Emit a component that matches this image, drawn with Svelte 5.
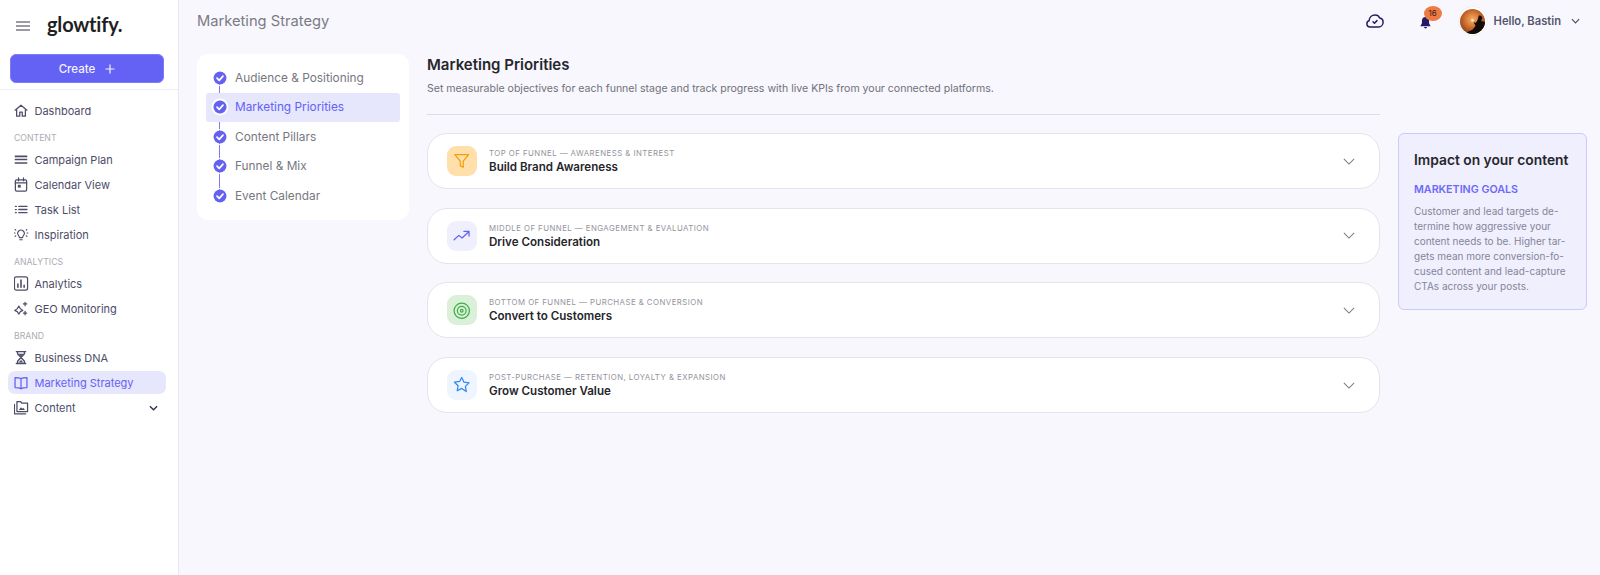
<script lang="ts">
  const nav = [
    { type: 'item', label: 'Dashboard', icon: 'home' },
    { type: 'head', label: 'CONTENT' },
    { type: 'item', label: 'Campaign Plan', icon: 'plan' },
    { type: 'item', label: 'Calendar View', icon: 'calendar' },
    { type: 'item', label: 'Task List', icon: 'list' },
    { type: 'item', label: 'Inspiration', icon: 'bulb' },
    { type: 'head', label: 'ANALYTICS' },
    { type: 'item', label: 'Analytics', icon: 'chart' },
    { type: 'item', label: 'GEO Monitoring', icon: 'sparkle' },
    { type: 'head', label: 'BRAND' },
    { type: 'item', label: 'Business DNA', icon: 'hourglass' },
    { type: 'item', label: 'Marketing Strategy', icon: 'book', active: true },
    { type: 'item', label: 'Content', icon: 'photos', caret: true }
  ];

  const steps = [
    { label: 'Audience & Positioning' },
    { label: 'Marketing Priorities', active: true },
    { label: 'Content Pillars' },
    { label: 'Funnel & Mix' },
    { label: 'Event Calendar' }
  ];

  const goals = [
    { over: 'TOP OF FUNNEL — AWARENESS & INTEREST', title: 'Build Brand Awareness', tone: 'amber', icon: 'funnel' },
    { over: 'MIDDLE OF FUNNEL — ENGAGEMENT & EVALUATION', title: 'Drive Consideration', tone: 'violet', icon: 'trend' },
    { over: 'BOTTOM OF FUNNEL — PURCHASE & CONVERSION', title: 'Convert to Customers', tone: 'green', icon: 'target' },
    { over: 'POST-PURCHASE — RETENTION, LOYALTY & EXPANSION', title: 'Grow Customer Value', tone: 'blue', icon: 'star' }
  ];

  const impactLines = [
    'Customer and lead targets de-',
    'termine how aggressive your',
    'content needs to be. Higher tar-',
    'gets mean more conversion-fo-',
    'cused content and lead-capture',
    'CTAs across your posts.'
  ];
</script>

{#snippet navIcon(name)}
  <svg class="nav-icon" viewBox="0 0 24 24" fill="none" stroke="currentColor" stroke-width="2" stroke-linecap="round" stroke-linejoin="round">
    {#if name === 'home'}
      <path d="M2.500 11.500 12 3.500l9.500 8M5 9.500V21h5v-6.500h4V21h5V9.500" />
    {:else if name === 'plan'}
      <path d="M2 7h20M2 12h20M2 17.500h20" stroke-width="2.600" stroke-linecap="butt" />
    {:else if name === 'calendar'}
      <rect x="3" y="4.500" width="18" height="18" rx="2" /><path d="M3 9.500h18M8 1.500V6M16 1.500V6" /><rect x="7" y="12.500" width="4.500" height="4.500" fill="currentColor" stroke="none" />
    {:else if name === 'list'}
      <path d="M8.500 7h13M8.500 12h13M8.500 17h13" stroke-width="2.200" /><path d="M3 7h1.500M3 12h1.500M3 17h1.500" stroke-width="2" />
    {:else if name === 'bulb'}
      <path d="M8 13.500a5.200 5.200 0 1 1 8 0c-.9 1.100-1.300 2-1.500 3.500h-5c-.2-1.500-.6-2.400-1.500-3.500ZM10 20.500h4M1 9.500h1.500M21.500 9.500H23M2.500 4l1.200 1M21.500 4l-1.200 1M2.500 15l1.200-1M21.500 15l-1.200-1" stroke-width="1.700" />
    {:else if name === 'chart'}
      <rect x="1.500" y="1.500" width="21" height="21" rx="3" /><path d="M7 18v-5M12 18V6.500M17 18v-3" stroke-width="2.500" />
    {:else if name === 'sparkle'}
      <path d="M8.500 8 11 12.500l4 2.500-4 2-2.500 4L6 17l-4-2 4-2.500Z" stroke-width="1.800" /><path d="M18.500 2v5.500M15.800 4.700h5.400M18.500 16.500V22M15.800 19.200h5.400" stroke-width="2" />
    {:else if name === 'hourglass'}
      <path d="M4.500 2.500h15M4.500 21.500h15M6.500 2.500v3.500L12 12l5.500-6V2.500M6.500 21.500V18L12 12l5.500 6v3.500" stroke-width="2.200" /><path d="M8 6h8l-4 4.500ZM8 20l4-4 4 4Z" fill="currentColor" stroke="none" />
    {:else if name === 'book'}
      <path d="M12 6C10 4.300 7 4 2.500 4v16c4.500 0 7.500.3 9.500 2 2-1.700 5-2 9.500-2V4C17 4 14 4.300 12 6ZM12 6v16" />
    {:else if name === 'photos'}
      <path d="M1.500 7v15h18" /><path d="M5.500 2.500h6l1.500 2.500h9.500v13.500h-17Z" /><path d="m8.500 16 3.500-4.500 2 2.500 1.500-1.500 3 3.500Z" fill="currentColor" stroke="none" />
    {/if}
  </svg>
{/snippet}

{#snippet goalIcon(name)}
  <svg class="goal-svg" viewBox="0 0 24 24" fill="none" stroke="currentColor" stroke-width="1.700" stroke-linecap="round" stroke-linejoin="round">
    {#if name === 'funnel'}
      <path d="M2.500 3.500h19l-7.500 9V21l-4-2v-6.500Z" />
    {:else if name === 'trend'}
      <path d="M1.500 17.500 8 11.500l4.500 3.500L21.500 6.500M15 6h7v6.500" />
    {:else if name === 'target'}
      <circle cx="12" cy="12" r="10.500" /><circle cx="12" cy="12" r="6" /><circle cx="12" cy="12" r="1.800" />
    {:else}
      <path d="m12 2 3 6.500 7 1-5 4.800 1.200 7L12 17l-6.200 3.300 1.200-7-5-4.800 7-1Z" />
    {/if}
  </svg>
{/snippet}

<div class="app">
  <aside class="sidebar">
    <div class="brand">
      <svg class="burger" viewBox="0 0 14 10" fill="none" stroke="currentColor" stroke-width="1.300"><path d="M0 1h14M0 5h14M0 9h14" /></svg>
      <span class="logo">glowtify.</span>
    </div>
    <div class="create-wrap">
      <button class="create">Create <svg viewBox="0 0 10 10" fill="none" stroke="currentColor" stroke-width="1.200"><path d="M5 .5v9M.5 5h9" /></svg></button>
    </div>
    <nav class="nav">
      {#each nav as row}
        {#if row.type === 'head'}
          <div class="nav-head">{row.label}</div>
        {:else}
          <div class="nav-item" class:active={row.active}>
            {@render navIcon(row.icon)}
            <span>{row.label}</span>
            {#if row.caret}
              <svg class="caret" viewBox="0 0 10 6" fill="none" stroke="currentColor" stroke-width="1.400"><path d="m1 1 4 4 4-4" /></svg>
            {/if}
          </div>
        {/if}
      {/each}
    </nav>
  </aside>

  <div class="page">
    <header class="topbar">
      <div class="page-title">Marketing Strategy</div>
      <div class="tools">
        <svg class="cloud" viewBox="0 0 24 19" fill="none" stroke="currentColor" stroke-width="2" stroke-linecap="round" stroke-linejoin="round">
          <path d="M5.500 17.500c-2.600 0-4.500-1.900-4.500-4.300 0-2 1.300-3.500 3-4C4.300 4.500 7.800 1.500 12 1.500c2.900 0 5.300 1.500 6.300 4 2.800.5 4.700 2.800 4.700 5.700 0 3.600-2.700 6.300-6 6.300Z" /><path d="m9.300 10.500 2 2 3.400-3.500" />
        </svg>
        <div class="bell">
          <svg viewBox="0 0 12 13" fill="currentColor"><path d="M6 0c2.400 0 3.900 1.800 3.900 4.300v2.500L11.600 10H.4l1.700-3.200V4.300C2.100 1.800 3.600 0 6 0ZM4.400 10.800h3.200a1.600 1.600 0 0 1-3.200 0Z" /></svg>
          <span class="badge">16</span>
        </div>
        <div class="user">
          <div class="avatar">
            <svg viewBox="0 0 24 24"><defs><radialGradient id="sun" cx="0.5" cy="0.42" r="0.62"><stop offset="0" stop-color="#f5b06a" /><stop offset="0.5" stop-color="#d2702f" /><stop offset="1" stop-color="#7f3c1c" /></radialGradient></defs><circle cx="12" cy="12" r="12" fill="url(#sun)" /><circle cx="12" cy="11" r="1.300" fill="#ffe6a8" /><clipPath id="disc"><circle cx="12" cy="12" r="12" /></clipPath><path clip-path="url(#disc)" d="M18 6.500c2-.6 3.500.8 3.300 2.600l-1 2.400 3.700 1V25H5l1-2.500 6-2.500 3-4-2-3.300 2.300.6 1.700-3Z" fill="#120b07" /></svg>
          </div>
          <span class="hello">Hello, Bastin</span>
          <svg class="user-caret" viewBox="0 0 10 6" fill="none" stroke="currentColor" stroke-width="1.300"><path d="m1 1 4 4 4-4" /></svg>
        </div>
      </div>
    </header>

    <div class="body">
      <div class="steps">
        {#each steps as step, i}
          <div class="step" class:active={step.active}>
            <span class="dot" class:first={i === 0} class:last={i === steps.length - 1}>
              <svg viewBox="0 0 14 14"><circle cx="7" cy="7" r="6.500" fill="#6461f0" /><path d="m4 7.200 2.200 2.100L10 5.200" fill="none" stroke="#fff" stroke-width="1.700" stroke-linecap="round" stroke-linejoin="round" /></svg>
            </span>
            <span>{step.label}</span>
          </div>
        {/each}
      </div>

      <main class="main">
        <h1>Marketing Priorities</h1>
        <p class="desc">Set measurable objectives for each funnel stage and track progress with live KPIs from your connected platforms.</p>
        <div class="goals">
          {#each goals as g}
            <div class="goal">
              <div class="goal-icon {g.tone}">{@render goalIcon(g.icon)}</div>
              <div class="goal-text">
                <div class="over">{g.over}</div>
                <div class="goal-title">{g.title}</div>
              </div>
              <svg class="goal-caret" viewBox="0 0 14 8" fill="none" stroke="currentColor" stroke-width="1.200"><path d="m1 1 6 6 6-6" /></svg>
            </div>
          {/each}
        </div>
      </main>

      <aside class="impact">
        <h2>Impact on your content</h2>
        <h3>MARKETING GOALS</h3>
        <p>
          {#each impactLines as line}
            <span>{line}</span>
          {/each}
        </p>
      </aside>
    </div>
  </div>
</div>

<style>
  :global(body) {
    margin: 0;
    background: #f7f7fd;
    font-family: "Inter", "Noto Sans", sans-serif;
  }
  .app {
    display: flex;
    height: 575px;
    overflow: hidden;
  }
  .sidebar {
    width: 178px;
    flex: none;
    background: #fff;
    border-right: 1px solid #e8e8f2;
    display: flex;
    flex-direction: column;
  }
  .brand {
    display: flex;
    align-items: center;
    height: 51px;
    padding-left: 16px;
    gap: 17px;
    color: #7b7b85;
  }
  .burger { width: 14px; height: 10px; }
  .logo {
    font-size: 20px;
    font-weight: 700;
    letter-spacing: -0.01em;
    color: #1f1f24;
    font-family: "Lato", sans-serif;
    padding-bottom: 3px;
  }
  .create-wrap {
    padding: 3px 14px 6px 10px;
    border-bottom: 1px solid #ededf5;
  }
  .create {
    width: 100%;
    height: 29px;
    border: 1px solid #7d7bf5;
    border-radius: 6px;
    background: #6461f5;
    color: #f3f3ff;
    font: 500 11.500px "Inter", sans-serif;
    display: flex;
    align-items: center;
    justify-content: center;
    gap: 10px;
  }
  .create svg { width: 10px; height: 10px; }
  .nav {
    display: flex;
    flex-direction: column;
    padding: 9px 12px 0 8px;
    color: #4d4d68;
  }
  .nav-item {
    height: 23px;
    margin-bottom: 2px;
    display: flex;
    align-items: center;
    gap: 5.500px;
    padding-left: 5px;
    border-radius: 7px;
    font-size: 11px;
  }
  .nav-item.active {
    background: #e6e6fd;
    color: #6461f5;
  }
  .nav-icon { width: 15px; height: 15px; flex: none; padding: 0 0.500px; }
  .caret { width: 9px; height: 6px; margin-left: auto; margin-right: 8px; color: #2f2f44; }
  .nav-head {
    font-size: 8.700px;
    color: #acacb4;
    padding: 9px 0 4px 6px;
    line-height: 11px;
  }
  .page {
    flex: 1;
    min-width: 0;
    display: flex;
    flex-direction: column;
  }
  .topbar {
    height: 42px;
    flex: none;
    display: flex;
    align-items: center;
    justify-content: space-between;
    padding-left: 18px;
  }
  .page-title {
    font-size: 14.700px;
    color: #7b7b85;
  }
  .tools { display: flex; align-items: center; }
  .cloud { width: 18px; height: 14px; color: #241a66; margin-right: 36px; }
  .bell { position: relative; width: 11px; height: 12px; color: #241a66; margin-right: 28px; margin-top: 3px; }
  .bell svg { width: 11px; height: 12px; display: block; }
  .badge {
    position: absolute;
    left: 4px;
    top: -11px;
    width: 18px;
    height: 15px;
    border-radius: 50%;
    background: #ee7a45;
    color: #3b1d10;
    font-size: 8px;
    line-height: 15px;
    text-align: center;
  }
  .user { display: flex; align-items: center; }
  .avatar {
    width: 25px;
    height: 25px;
    padding: 1.500px;
    background: #fff;
    border-radius: 50%;
    box-shadow: 0 0 0 0.500px #e6e6ec;
    margin-right: 7px;
  }
  .avatar svg { width: 25px; height: 25px; display: block; }
  .hello { font-size: 11.200px; font-weight: 600; color: #55556f; }
  .user-caret { width: 9px; height: 6px; margin: 0 20px 0 10px; color: #4d4d68; }
  .body {
    display: flex;
    align-items: flex-start;
    padding: 12px 13px 0 18px;
  }
  .steps {
    width: 212px;
    flex: none;
    background: #fff;
    border-radius: 11px;
    padding: 9px;
    box-sizing: border-box;
    height: 166px;
    display: flex;
    flex-direction: column;
  }
  .step {
    height: 29.500px;
    flex: none;
    display: flex;
    align-items: center;
    gap: 9px;
    padding-left: 7px;
    font-size: 11.850px;
    color: #77777f;
    border-radius: 3px;
  }
  .step.active { background: #e6e6fd; color: #6461f5; }
  .dot { position: relative; width: 13px; height: 13px; flex: none; }
  .dot svg {
    position: relative;
    width: 14px;
    height: 14px;
    display: block;
    margin: -0.500px;
    border-radius: 50%;
    box-shadow: 0 0 0 1px #fff;
  }
  .dot::before {
    content: "";
    position: absolute;
    left: 6px;
    top: -8.250px;
    height: 29.500px;
    width: 1px;
    background: #7d7bf5;
  }
  .dot.first::before { top: 6px; height: 15.250px; }
  .dot.last::before { height: 14.750px; }
  .step.active .dot::before { display: none; }
  .step.active .dot svg { box-shadow: 0 0 0 1.500px #fff; }
  .main {
    width: 953px;
    flex: none;
    margin-left: 18px;
    min-width: 0;
  }
  h1 {
    margin: 0;
    font-size: 15px;
    font-weight: 600;
    line-height: 22px;
    color: #26262c;
  }
  .desc {
    margin: 5px 0 0;
    font-size: 10.550px;
    line-height: 16px;
    color: #71717a;
    padding-bottom: 17px;
    border-bottom: 1px solid #dcdce4;
  }
  .goals {
    display: flex;
    flex-direction: column;
    gap: 18.700px;
    margin-top: 18px;
  }
  .goal {
    height: 56px;
    box-sizing: border-box;
    background: #fff;
    border: 1px solid #e4e4ea;
    border-radius: 20px;
    display: flex;
    align-items: center;
    padding: 0 18px 0 19px;
  }
  .goal-icon {
    width: 30px;
    height: 30px;
    border-radius: 9px;
    display: flex;
    align-items: center;
    justify-content: center;
    flex: none;
  }
  .goal-svg { width: 17.500px; height: 17.500px; }
  .amber { background: #ffdfaa; color: #f59e0b; }
  .violet { background: #efeffe; color: #6461f5; }
  .green { background: #daf0d8; color: #3fae49; }
  .blue { background: #eef5ff; color: #2f86f6; }
  .goal-text { margin-left: 12px; flex: 1; padding-top: 1px; }
  .over {
    font-size: 7.800px;
    letter-spacing: 0.06em;
    line-height: 11px;
    color: #94949c;
  }
  .goal-title {
    font-size: 11.600px;
    font-weight: 600;
    line-height: 16px;
    color: #26262c;
  }
  .goal-caret { width: 12px; height: 7px; color: #7b7b85; margin-right: 6px; }
  .impact {
    width: 189px;
    flex: none;
    box-sizing: border-box;
    height: 177px;
    margin: 79px 0 0 18px;
    padding: 16px 15px;
    background: #f0effd;
    border: 1px solid #cbcafb;
    border-radius: 6px;
  }
  h2 {
    margin: 0;
    font-size: 13.800px;
    font-weight: 600;
    line-height: 20px;
    color: #26262c;
  }
  h3 {
    margin: 13px 0 0;
    font-size: 10.700px;
    font-weight: 600;
    line-height: 14px;
    color: #6c69f7;
  }
  .impact p {
    margin: 7px 0 0;
    font-size: 10px;
    line-height: 15px;
    color: #85859a;
  }
  .impact p span { display: block; white-space: nowrap; }
</style>
